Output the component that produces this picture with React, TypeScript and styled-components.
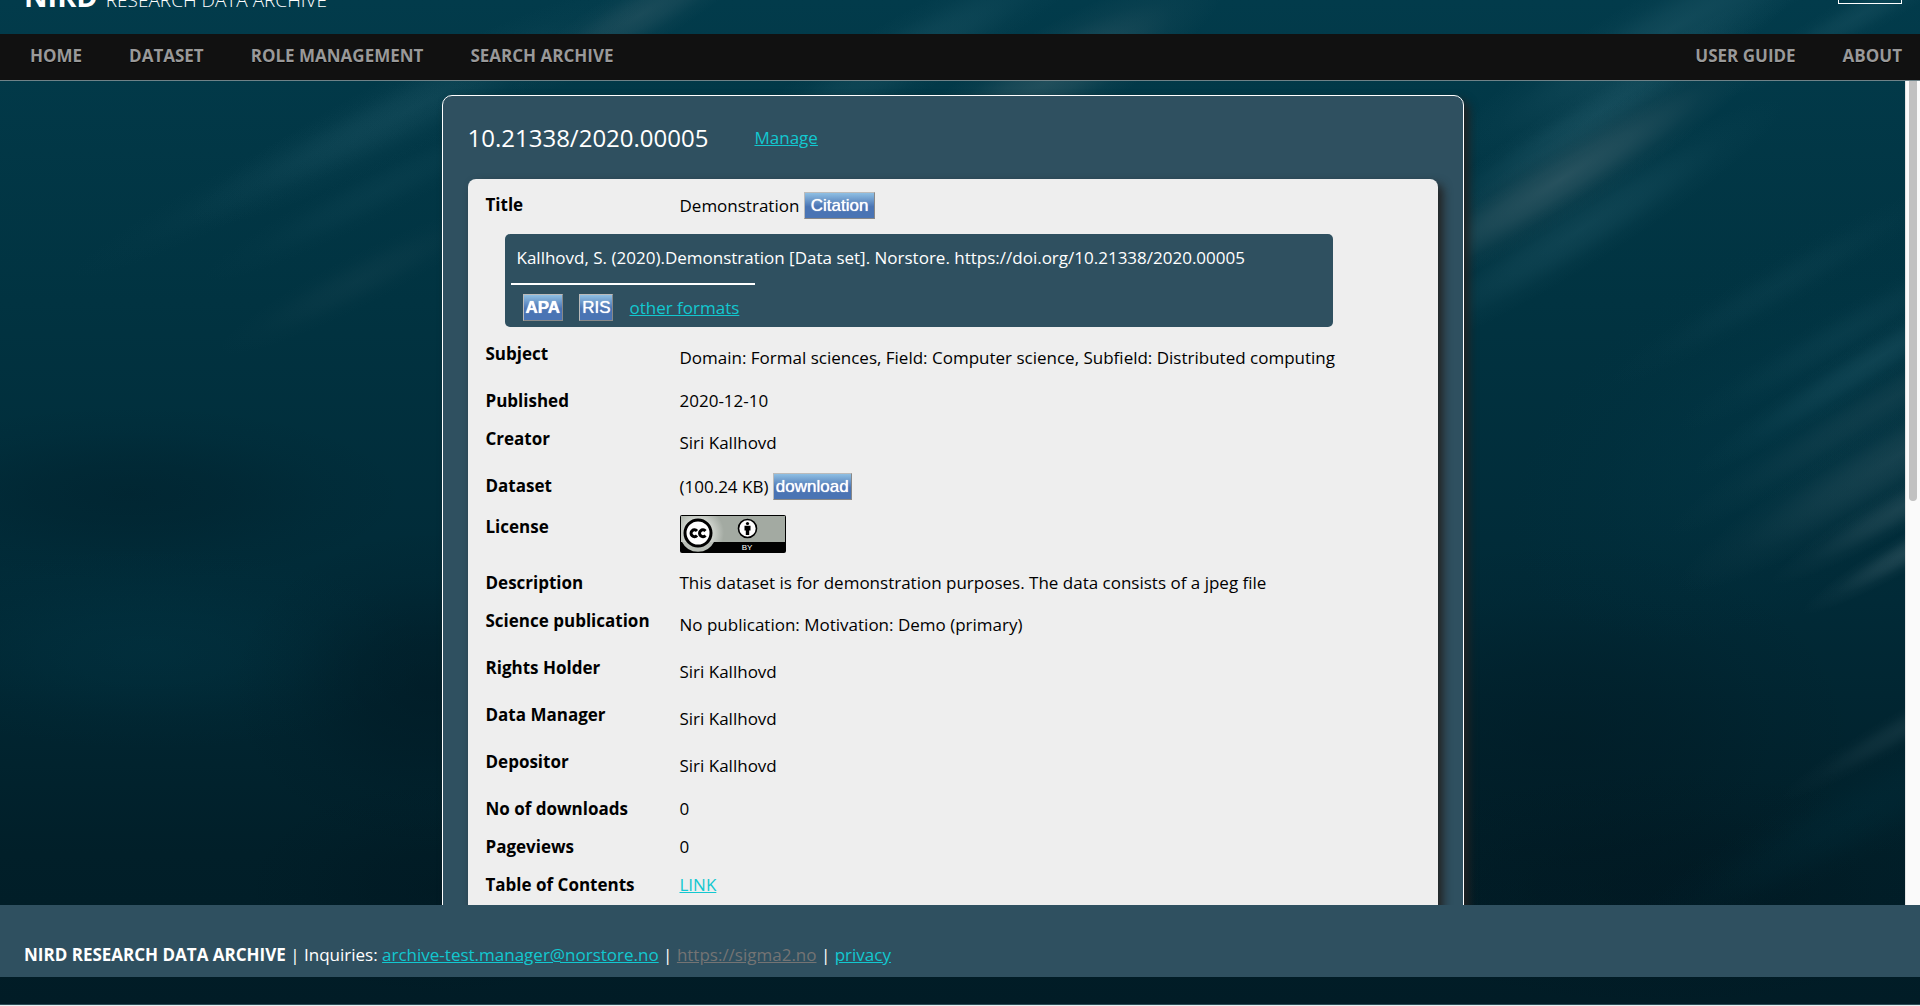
import React from 'react';
import styled, { createGlobalStyle, css } from 'styled-components';

const slate = '#2f5060';
const accent = '#12c8d0';

const GlobalStyle = createGlobalStyle`
  * { box-sizing: border-box; }
  html, body { margin: 0; background: #011a24; }
  body {
    font-family: 'Open Sans', 'Noto Sans', sans-serif;
    font-size: 17px;
    line-height: 22px;
    color: #000;
  }
`;

const Page = styled.div`
  position: relative;
  isolation: isolate;
  display: flex;
  flex-direction: column;
  height: 100vh;
  overflow: hidden;
  border-bottom: 1px solid #e8eef0;
`;

const Backdrop = styled.svg`
  position: absolute;
  inset: 0;
  z-index: -1;
  width: 100%;
  height: 100%;
`;

const Masthead = styled.header`
  flex: none;
  display: flex;
  justify-content: space-between;
  align-items: flex-end;
  height: 34px;
  padding: 0 18px 0 24px;
  color: #fff;
`;

const Brand = styled.div`
  padding-bottom: 20px;
  font-size: 19px;
  line-height: 28px;
  font-weight: 300;
  white-space: nowrap;
`;

const BrandName = styled.strong`
  margin-right: 8px;
  font-size: 29px;
  font-weight: 700;
`;

const AccountButton = styled.button`
  width: 64px;
  height: 30px;
  margin-bottom: 30px;
  border: 1px solid #fff;
  background: transparent;
`;

const Nav = styled.nav`
  flex: none;
  display: flex;
  align-items: center;
  justify-content: space-between;
  height: 46px;
  padding: 0 18px 2px 30px;
  background: #111;
`;

const NavGroup = styled.div`
  display: flex;
  gap: 47px;
`;

const NavLink = styled.a`
  color: #999;
  font-weight: 700;
  text-decoration: none;
  text-shadow: 0 1px 0 #000;
`;

const Viewport = styled.div`
  flex: 1;
  min-height: 0;
  display: flex;
  border-top: 1px solid #6f8288;
`;

const Main = styled.main`
  flex: 1;
  min-width: 0;
  overflow: hidden;
  padding: 14px 20px 0;
`;

const ScrollTrack = styled.div`
  flex: none;
  width: 15px;
  padding: 0 3px 0 3px;
  background: #fafafa;
  border-left: 1px solid #e4e4e4;
`;

const ScrollThumb = styled.div`
  height: 51%;
  border-radius: 0 0 4px 4px;
  background: #c1c1c1;
`;

const Card = styled.section`
  max-width: 1022px;
  margin: 0 auto;
  padding: 24px 25px;
  border: 1px solid #fff;
  border-radius: 10px;
  background: ${slate};
  box-shadow: 5px 5px 10px #222;
`;

const CardHeader = styled.div`
  display: flex;
  align-items: center;
  gap: 46px;
  height: 35px;
  margin-bottom: 24px;
`;

const Doi = styled.h1`
  margin: 0;
  font-size: 24px;
  line-height: 34px;
  font-weight: 400;
  color: #fff;
`;

const TextLink = styled.a<{ $muted?: boolean }>`
  color: ${(p) => (p.$muted ? '#747474' : accent)};
`;

const Sheet = styled.div`
  padding: 6px 10px 40px;
  border-radius: 8px;
  background: #eee;
  box-shadow: 5px 5px 10px #222;
`;

const Details = styled.table`
  width: 100%;
  border-collapse: collapse;
`;

const Row = styled.tr<{ $height: number }>`
  height: ${(p) => p.$height}px;
`;

const Label = styled.th`
  width: 202px;
  padding: 9px 8px 0;
  text-align: left;
  vertical-align: top;
  font-weight: 700;
`;

const Value = styled.td<{ $kind?: 'list' | 'action' | 'image' }>`
  padding: 9px 0 0;
  vertical-align: top;
  ${(p) => p.$kind === 'list' && css`padding-top: 13px;`}
  ${(p) => p.$kind === 'action' && css`padding-top: 7px; line-height: 27px;`}
  ${(p) => p.$kind === 'image' && css`padding-top: 8px;`}
`;

const CitationCell = styled.td`
  padding: 7px 95px 7px 27px;
`;

const CitationBox = styled.div`
  height: 93px;
  padding: 13px 6px 0;
  border-radius: 5px;
  background: ${slate};
  color: #fff;
`;

const CitationText = styled.p`
  margin: 0;
  padding-left: 6px;
`;

const Rule = styled.hr`
  width: 30%;
  height: 2px;
  margin: 14px 0 9px;
  border: 0;
  background: #fff;
`;

const Formats = styled.div`
  display: flex;
  align-items: center;
  gap: 16px;
  padding-left: 12px;
`;

const GlossButton = styled.button<{ $pad?: number; $bold?: boolean }>`
  height: 27px;
  padding: 0 ${(p) => p.$pad ?? 2}px;
  border: 1px solid;
  border-color: #bbb #888 #888 #bbb;
  background: linear-gradient(#8fbfe3 0%, #4a74b4 55%, #4a74b4 100%);
  color: #fff;
  font-family: 'Liberation Sans', Arial, sans-serif;
  font-size: 17px;
  line-height: 25px;
  font-weight: ${(p) => (p.$bold ? 700 : 400)};
  text-shadow: 0 0 1px #fff;
  vertical-align: top;
`;

const Badge = styled.svg`
  display: block;
  width: 106px;
  height: 38px;
`;

const Footer = styled.footer`
  flex: none;
  height: 72px;
  margin-bottom: 28px;
  padding: 39px 24px 0;
  background: ${slate};
  color: #fff;
`;

type Glow = { x: number; y: number; rx: number; ry: number; turn?: number; tone: 'ray' | 'warm' | 'dark' | 'teal'; strength: number };

const glows: Glow[] = [
  { x: 130, y: 495, rx: 280, ry: 90, tone: 'dark', strength: 0.25 },
  { x: 150, y: 650, rx: 280, ry: 100, tone: 'teal', strength: 0.35 },
  { x: 430, y: 690, rx: 200, ry: 160, tone: 'dark', strength: 0.4 },
  { x: 440, y: 890, rx: 200, ry: 110, tone: 'dark', strength: 0.3 },
  { x: 1560, y: 740, rx: 300, ry: 200, tone: 'dark', strength: 0.3 },
  { x: 1660, y: 890, rx: 320, ry: 120, tone: 'dark', strength: 0.35 },
  { x: 1800, y: 420, rx: 320, ry: 180, turn: -30, tone: 'teal', strength: 0.4 },
  { x: 420, y: 105, rx: 260, ry: 40, turn: -27, tone: 'ray', strength: 0.25 },
  { x: 300, y: 160, rx: 260, ry: 28, turn: -27, tone: 'ray', strength: 0.1 },
  { x: 380, y: 190, rx: 200, ry: 26, turn: -27, tone: 'ray', strength: 0.12 },
  { x: 360, y: 280, rx: 160, ry: 26, turn: -27, tone: 'warm', strength: 0.1 },
  { x: 640, y: 15, rx: 150, ry: 32, turn: -30, tone: 'warm', strength: 0.32 },
  { x: 1050, y: 80, rx: 200, ry: 50, turn: -30, tone: 'warm', strength: 0.42 },
  { x: 900, y: 60, rx: 240, ry: 40, turn: -30, tone: 'ray', strength: 0.3 },
  { x: 1600, y: 112, rx: 230, ry: 28, turn: -32, tone: 'ray', strength: 0.4 },
  { x: 1670, y: 30, rx: 280, ry: 44, turn: -30, tone: 'ray', strength: 0.35 },
  { x: 1560, y: 180, rx: 240, ry: 38, turn: -32, tone: 'warm', strength: 0.5 },
  { x: 1580, y: 230, rx: 240, ry: 36, turn: -32, tone: 'ray', strength: 0.3 },
  { x: 1860, y: 15, rx: 160, ry: 22, turn: -30, tone: 'ray', strength: 0.25 },
  { x: 1780, y: 285, rx: 200, ry: 24, turn: -30, tone: 'ray', strength: 0.12 },
  { x: 1850, y: 330, rx: 200, ry: 24, turn: -30, tone: 'ray', strength: 0.15 },
  { x: 1880, y: 357, rx: 220, ry: 24, turn: -32, tone: 'ray', strength: 0.3 },
  { x: 1890, y: 400, rx: 260, ry: 28, turn: -31, tone: 'warm', strength: 0.18 },
  { x: 1900, y: 455, rx: 260, ry: 40, turn: -31, tone: 'warm', strength: 0.28 },
  { x: 1910, y: 503, rx: 160, ry: 22, turn: -30, tone: 'warm', strength: 0.35 },
  { x: 1915, y: 548, rx: 130, ry: 18, turn: -30, tone: 'warm', strength: 0.4 },
  { x: 1910, y: 725, rx: 150, ry: 18, turn: -30, tone: 'warm', strength: 0.2 },
  { x: 1850, y: 820, rx: 260, ry: 44, turn: -28, tone: 'teal', strength: 0.2 },
];

const tones = { ray: '#2f6675', warm: '#4d6d77', dark: '#00121b', teal: '#023a4a' };

function OceanBackdrop() {
  return (
    <Backdrop viewBox="0 0 1920 1006" preserveAspectRatio="none" aria-hidden="true">
      <defs>
        <linearGradient id="depth" x1="0" y1="0" x2="0" y2="1">
          <stop offset="0" stopColor="#023b4b" />
          <stop offset="0.3" stopColor="#013341" />
          <stop offset="0.6" stopColor="#012a37" />
          <stop offset="0.85" stopColor="#011f29" />
          <stop offset="1" stopColor="#011c26" />
        </linearGradient>
        {Object.entries(tones).map(([name, color]) => (
          <radialGradient key={name} id={`glow-${name}`}>
            <stop offset="0" stopColor={color} stopOpacity="1" />
            <stop offset="0.35" stopColor={color} stopOpacity="0.7" />
            <stop offset="0.7" stopColor={color} stopOpacity="0.2" />
            <stop offset="1" stopColor={color} stopOpacity="0" />
          </radialGradient>
        ))}
      </defs>
      <rect width="1920" height="1006" fill="url(#depth)" />
      {glows.map((g, i) => (
        <ellipse
          key={i}
          cx={g.x}
          cy={g.y}
          rx={g.rx}
          ry={g.ry}
          fill={`url(#glow-${g.tone})`}
          opacity={g.strength}
          transform={`rotate(${g.turn ?? 0} ${g.x} ${g.y})`}
        />
      ))}
      <rect y="1005" width="1920" height="1" fill="#2c4c57" />
    </Backdrop>
  );
}

function LicenseBadge() {
  return (
    <Badge viewBox="0 0 106 38" role="img" aria-label="Creative Commons Attribution">
      <defs>
        <radialGradient id="shine" gradientUnits="userSpaceOnUse" cx="18" cy="18" r="26">
          <stop offset="0.5" stopColor="#d4d8d2" />
          <stop offset="1" stopColor="#a3aaa2" />
        </radialGradient>
      </defs>
      <rect width="106" height="38" rx="2" fill="#000" />
      <rect x="1" y="1" width="104" height="26" fill="url(#shine)" />
      <path d="M1 27 H2 A18 18 0 0 0 34 27 Z" fill="#b9beb7" />
      <circle cx="18" cy="18" r="13" fill="#fff" stroke="#000" strokeWidth="3" />
      <g fill="none" stroke="#000" strokeWidth="3">
        <path d="M17 16 A3.4 3.4 0 1 0 17 20.5" />
        <path d="M25.5 16 A3.4 3.4 0 1 0 25.5 20.5" />
      </g>
      <circle cx="67.5" cy="13.5" r="9" fill="#fff" stroke="#000" strokeWidth="1.6" />
      <circle cx="67.5" cy="8.5" r="1.6" fill="#000" />
      <path d="M64.5 10.8 H70.5 V15.5 H69.2 V20 H65.8 V15.5 H64.5 Z" fill="#000" />
      <text x="67" y="35" textAnchor="middle" fill="#fff" fontFamily="Liberation Sans, Arial, sans-serif" fontSize="8">BY</text>
    </Badge>
  );
}

type Field = { label: string; value: React.ReactNode; kind?: 'list' | 'action' | 'image'; height: number };

const fields: Field[] = [
  { label: 'Subject', value: 'Domain: Formal sciences, Field: Computer science, Subfield: Distributed computing', kind: 'list', height: 47 },
  { label: 'Published', value: '2020-12-10', height: 38 },
  { label: 'Creator', value: 'Siri Kallhovd', kind: 'list', height: 47 },
  { label: 'Dataset', value: <>(100.24 KB) <GlossButton type="button">download</GlossButton></>, kind: 'action', height: 41 },
  { label: 'License', value: <LicenseBadge />, kind: 'image', height: 56 },
  { label: 'Description', value: 'This dataset is for demonstration purposes. The data consists of a jpeg file', height: 38 },
  { label: 'Science publication', value: 'No publication: Motivation: Demo (primary)', kind: 'list', height: 47 },
  { label: 'Rights Holder', value: 'Siri Kallhovd', kind: 'list', height: 47 },
  { label: 'Data Manager', value: 'Siri Kallhovd', kind: 'list', height: 47 },
  { label: 'Depositor', value: 'Siri Kallhovd', kind: 'list', height: 47 },
  { label: 'No of downloads', value: '0', height: 38 },
  { label: 'Pageviews', value: '0', height: 38 },
  { label: 'Table of Contents', value: <TextLink href="#contents">LINK</TextLink>, height: 38 },
];

export default function App() {
  return (
    <>
      <GlobalStyle />
      <Page>
        <OceanBackdrop />
        <Masthead>
          <Brand><BrandName>NIRD</BrandName>RESEARCH DATA ARCHIVE</Brand>
          <AccountButton type="button" aria-label="Account" />
        </Masthead>
        <Nav>
          <NavGroup>
            <NavLink href="#home">HOME</NavLink>
            <NavLink href="#dataset">DATASET</NavLink>
            <NavLink href="#roles">ROLE MANAGEMENT</NavLink>
            <NavLink href="#search">SEARCH ARCHIVE</NavLink>
          </NavGroup>
          <NavGroup>
            <NavLink href="#guide">USER GUIDE</NavLink>
            <NavLink href="#about">ABOUT</NavLink>
          </NavGroup>
        </Nav>
        <Viewport>
          <Main>
            <Card>
              <CardHeader>
                <Doi>10.21338/2020.00005</Doi>
                <TextLink href="#manage">Manage</TextLink>
              </CardHeader>
              <Sheet>
                <Details>
                  <tbody>
                    <Row $height={42}>
                      <Label scope="row">Title</Label>
                      <Value $kind="action">
                        Demonstration <GlossButton type="button" $pad={6}>Citation</GlossButton>
                      </Value>
                    </Row>
                    <tr>
                      <CitationCell colSpan={2}>
                        <CitationBox>
                          <CitationText>
                            Kallhovd, S. (2020).Demonstration [Data set]. Norstore. https://doi.org/10.21338/2020.00005
                          </CitationText>
                          <Rule />
                          <Formats>
                            <GlossButton type="button" $bold>APA</GlossButton>
                            <GlossButton type="button">RIS</GlossButton>
                            <TextLink href="#formats">other formats</TextLink>
                          </Formats>
                        </CitationBox>
                      </CitationCell>
                    </tr>
                    {fields.map((f) => (
                      <Row key={f.label} $height={f.height}>
                        <Label scope="row">{f.label}</Label>
                        <Value $kind={f.kind}>{f.value}</Value>
                      </Row>
                    ))}
                  </tbody>
                </Details>
              </Sheet>
            </Card>
          </Main>
          <ScrollTrack aria-hidden="true"><ScrollThumb /></ScrollTrack>
        </Viewport>
        <Footer>
          <strong>NIRD RESEARCH DATA ARCHIVE</strong> | Inquiries:{' '}
          <TextLink href="mailto:archive-test.manager@norstore.no">archive-test.manager@norstore.no</TextLink> |{' '}
          <TextLink $muted href="#sigma2">https://sigma2.no</TextLink> | <TextLink href="#privacy">privacy</TextLink>
        </Footer>
      </Page>
    </>
  );
}
